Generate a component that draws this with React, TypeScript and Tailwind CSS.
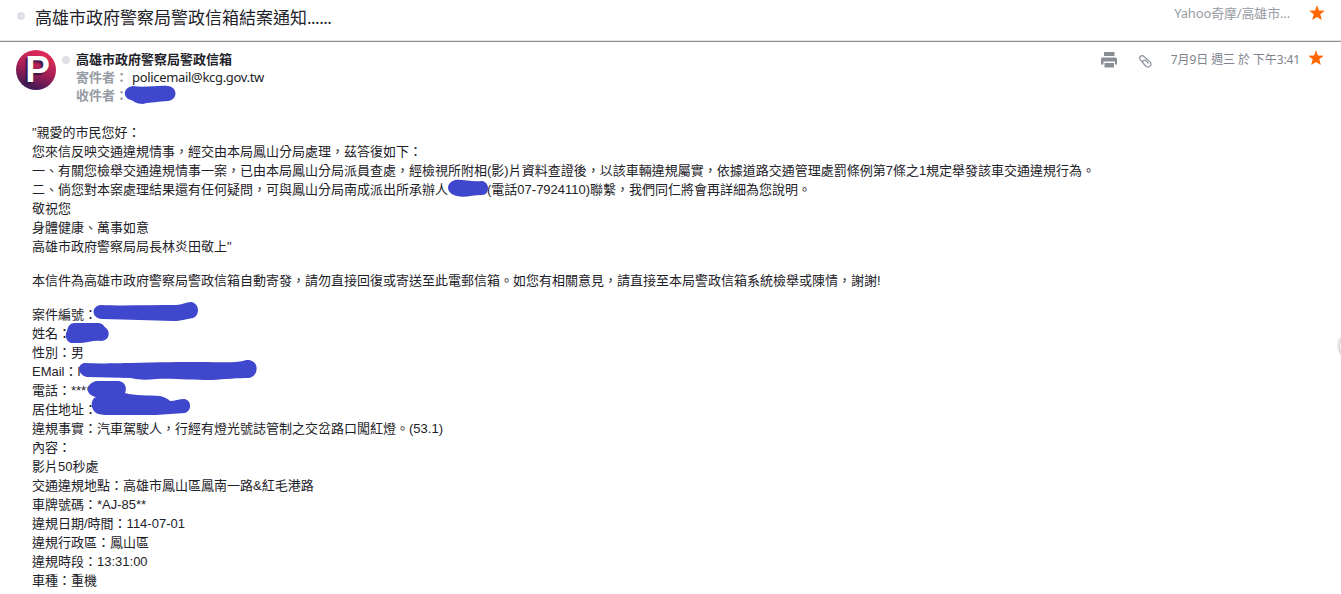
import React from 'react';

interface IconProps {
  className?: string;
}

const StarIcon: React.FC<IconProps> = ({ className }) => (
  <svg className={className} width="16" height="16" viewBox="0 0 16 16" fill="#ff6600">
    <path d="M8 .2l2 5.300 5.700.200-4.400 3.600 1.500 5.700L8 11.900l-4.800 3.100 1.500-5.700L.3 5.700l5.700-.200z" />
  </svg>
);

const PrinterIcon: React.FC<IconProps> = ({ className }) => (
  <svg className={className} width="16" height="16" viewBox="0 0 16 16" fill="#8a8e97">
    <path d="M3 0h10.500v4H3z" />
    <path d="M1.500 5.500h13A1.500 1.500 0 0 1 16 7v5.500h-2V9.500H2.500v3H0V7a1.500 1.500 0 0 1 1.500-1.500z" />
    <path d="M3.500 11h9.500v4.500H3.500z" />
  </svg>
);

const ClipIcon: React.FC<IconProps> = ({ className }) => (
  <svg
    className={className}
    width="13"
    height="13"
    viewBox="0 0 13 13"
    fill="none"
    stroke="#8f949d"
    strokeWidth="1.25"
    strokeLinecap="round"
  >
    <path d="M3 6.500L1.400 4.900A2.300 2.300 0 0 1 4.900 1.500L11.100 6.900A3 3 0 0 1 7.200 11.400L4.300 8.500A1.900 1.900 0 0 1 7 5.700L9.300 8.100" />
  </svg>
);

const Avatar: React.FC = () => (
  <div className="flex h-10 w-10 shrink-0 items-center justify-center rounded-full bg-[linear-gradient(200deg,#dc2b58_15%,#a91f55_50%,#3d1a55_88%)]">
    <span className="pl-[3px] font-['Liberation_Sans',sans-serif] text-[37px] leading-10 font-bold text-white [text-shadow:-2px_2px_2px_#351748]">
      P
    </span>
  </div>
);

const Dot: React.FC<IconProps> = ({ className }) => (
  <span className={`block h-2 w-2 shrink-0 rounded-full bg-[#dfe1e6] ${className}`} />
);

// Marker strokes covering the private fields
const Redactions: React.FC = () => (
  <svg
    className="pointer-events-none absolute top-0 left-0"
    width="1341"
    height="594"
    viewBox="0 0 1341 594"
    fill="#3f48cc"
  >
    <path d="M133 86C145 88 158 85 168 86C178 87 178 100 168 101C160 102 150 102 143 104C136 104 134 101 131 100C123 98 122 88 133 86Z" />
    <path d="M455 180C463 179 470 182 482 181C490 182 490 195 482 195C473 195 464 198 457 196C446 194 445 183 455 180Z" />
    <path d="M101 305C120 306 150 305 176 305C182 305 186 302 191 302C200 303 200 316 193 318C185 319 182 321 173 321C150 320 130 320 102 319C91 318 91 306 101 305Z" />
    <path d="M75 323H99C104 324 104 327 106 328C111 332 109 341 101 341C93 340 88 343 81 343H71C65 341 65 334 67 331C68 326 70 323 75 323Z" />
    <path d="M84 363C101 364 120 363 130 363C160 362 180 362 200 362C220 362 235 363 243 361C247 359 254 360 256 365C258 371 255 377 249 378C238 378 226 379 211 380C192 380 171 378 156 379C147 380 138 380 131 378L87 377C78 375 76 365 84 363Z" />
    <path d="M96 381H119C126 382 127 389 125 393C135 396 149 395 160 396C165 397 168 399 170 401C175 401 179 399 184 399C192 400 192 411 185 413C175 414 165 414 156 415L109 415C99 415 94 414 92 407C91 402 93 398 96 397C85 395 85 384 96 381Z" />
  </svg>
);

const reply = [
  '"親愛的市民您好：',
  '您來信反映交通違規情事，經交由本局鳳山分局處理，茲答復如下：',
  '一、有關您檢舉交通違規情事一案，已由本局鳳山分局派員查處，經檢視所附相(影)片資料查證後，以該車輛違規屬實，依據道路交通管理處罰條例第7條之1規定舉發該車交通違規行為。',
];

const closing = ['敬祝您', '身體健康、萬事如意', '高雄市政府警察局局長林炎田敬上"'];

const details = [
  '案件編號：',
  '姓名：',
  '性別：男',
  'EMail：l',
  '電話：****',
  '居住地址：',
  '違規事實：汽車駕駛人，行經有燈光號誌管制之交岔路口闖紅燈。(53.1)',
  '內容：',
  '影片50秒處',
  '交通違規地點：高雄市鳳山區鳳南一路&紅毛港路',
  '車牌號碼：*AJ-85**',
  '違規日期/時間：114-07-01',
  '違規行政區：鳳山區',
  '違規時段：13:31:00',
  '車種：重機',
];

export default function App() {
  return (
    <div className="relative h-[594px] w-[1341px] overflow-hidden bg-white font-['Noto_Sans','Noto_Sans_CJK_TC',sans-serif] text-[13px] whitespace-nowrap text-[#1d2228]">
      <header className="flex h-[42px] items-start border-b border-[#8d9097] pr-4 pl-[17px] shadow-[inset_0_-1px_0_#e2e3e5]">
        <Dot className="mt-3" />
        <h1 className="ml-[10px] pt-1 text-[17px] leading-7">
          高雄市政府警察局警政信箱結案通知<span className="tracking-[-0.5px]">......</span>
        </h1>
        <div className="ml-auto flex items-start pt-[5px]">
          <span className="mt-[-1px] mr-[19px] leading-[18px] tracking-[-0.16px] text-[#979ba4]">
            Yahoo奇摩/高雄市...
          </span>
          <StarIcon />
        </div>
      </header>

      <section className="flex h-[81px] items-start pt-2 pr-[17px] pl-4">
        <Avatar />
        <Dot className="mt-[6px] ml-[6px]" />
        <div className="ml-[6px] leading-[18px]">
          <p className="font-bold">高雄市政府警察局警政信箱</p>
          <p className="flex">
            <span className="w-14 font-bold text-[#979ba4]">寄件者：</span>
            <span className="tracking-[-0.32px]">policemail@kcg.gov.tw</span>
          </p>
          <p className="font-bold text-[#979ba4]">收件者：</p>
        </div>
        <div className="ml-auto flex items-start">
          <PrinterIcon className="mt-[2px] mr-[22px]" />
          <ClipIcon className="mt-[5px] mr-[19px]" />
          <span className="mt-px mr-2 text-[12px] leading-[18px] tracking-[-0.11px] text-[#7d828c]">
            7月9日 週三 於 下午3:41
          </span>
          <StarIcon />
        </div>
      </section>

      <main className="space-y-[15px] pl-8 font-['Liberation_Sans','Noto_Sans_CJK_TC',sans-serif] leading-[19px]">
        <div>
          {reply.map((line) => (
            <p key={line}>{line}</p>
          ))}
          <p className="flex">
            <span>二、倘您對本案處理結果還有任何疑問，可與鳳山分局南成派出所承辦人</span>
            <span className="w-[39px]" />
            <span>(電話07-7924110)聯繫，我們同仁將會再詳細為您說明。</span>
          </p>
          {closing.map((line) => (
            <p key={line}>{line}</p>
          ))}
        </div>
        <p>
          本信件為高雄市政府警察局警政信箱自動寄發，請勿直接回復或寄送至此電郵信箱。如您有相關意見，請直接至本局警政信箱系統檢舉或陳情，謝謝!
        </p>
        <div>
          {details.map((line) => (
            <p key={line}>{line}</p>
          ))}
        </div>
      </main>

      <Redactions />
      <div className="absolute top-[334px] left-[1340px] h-6 w-6 rounded-full bg-white shadow-[0_0_4px_0_#888]" />
    </div>
  );
}
